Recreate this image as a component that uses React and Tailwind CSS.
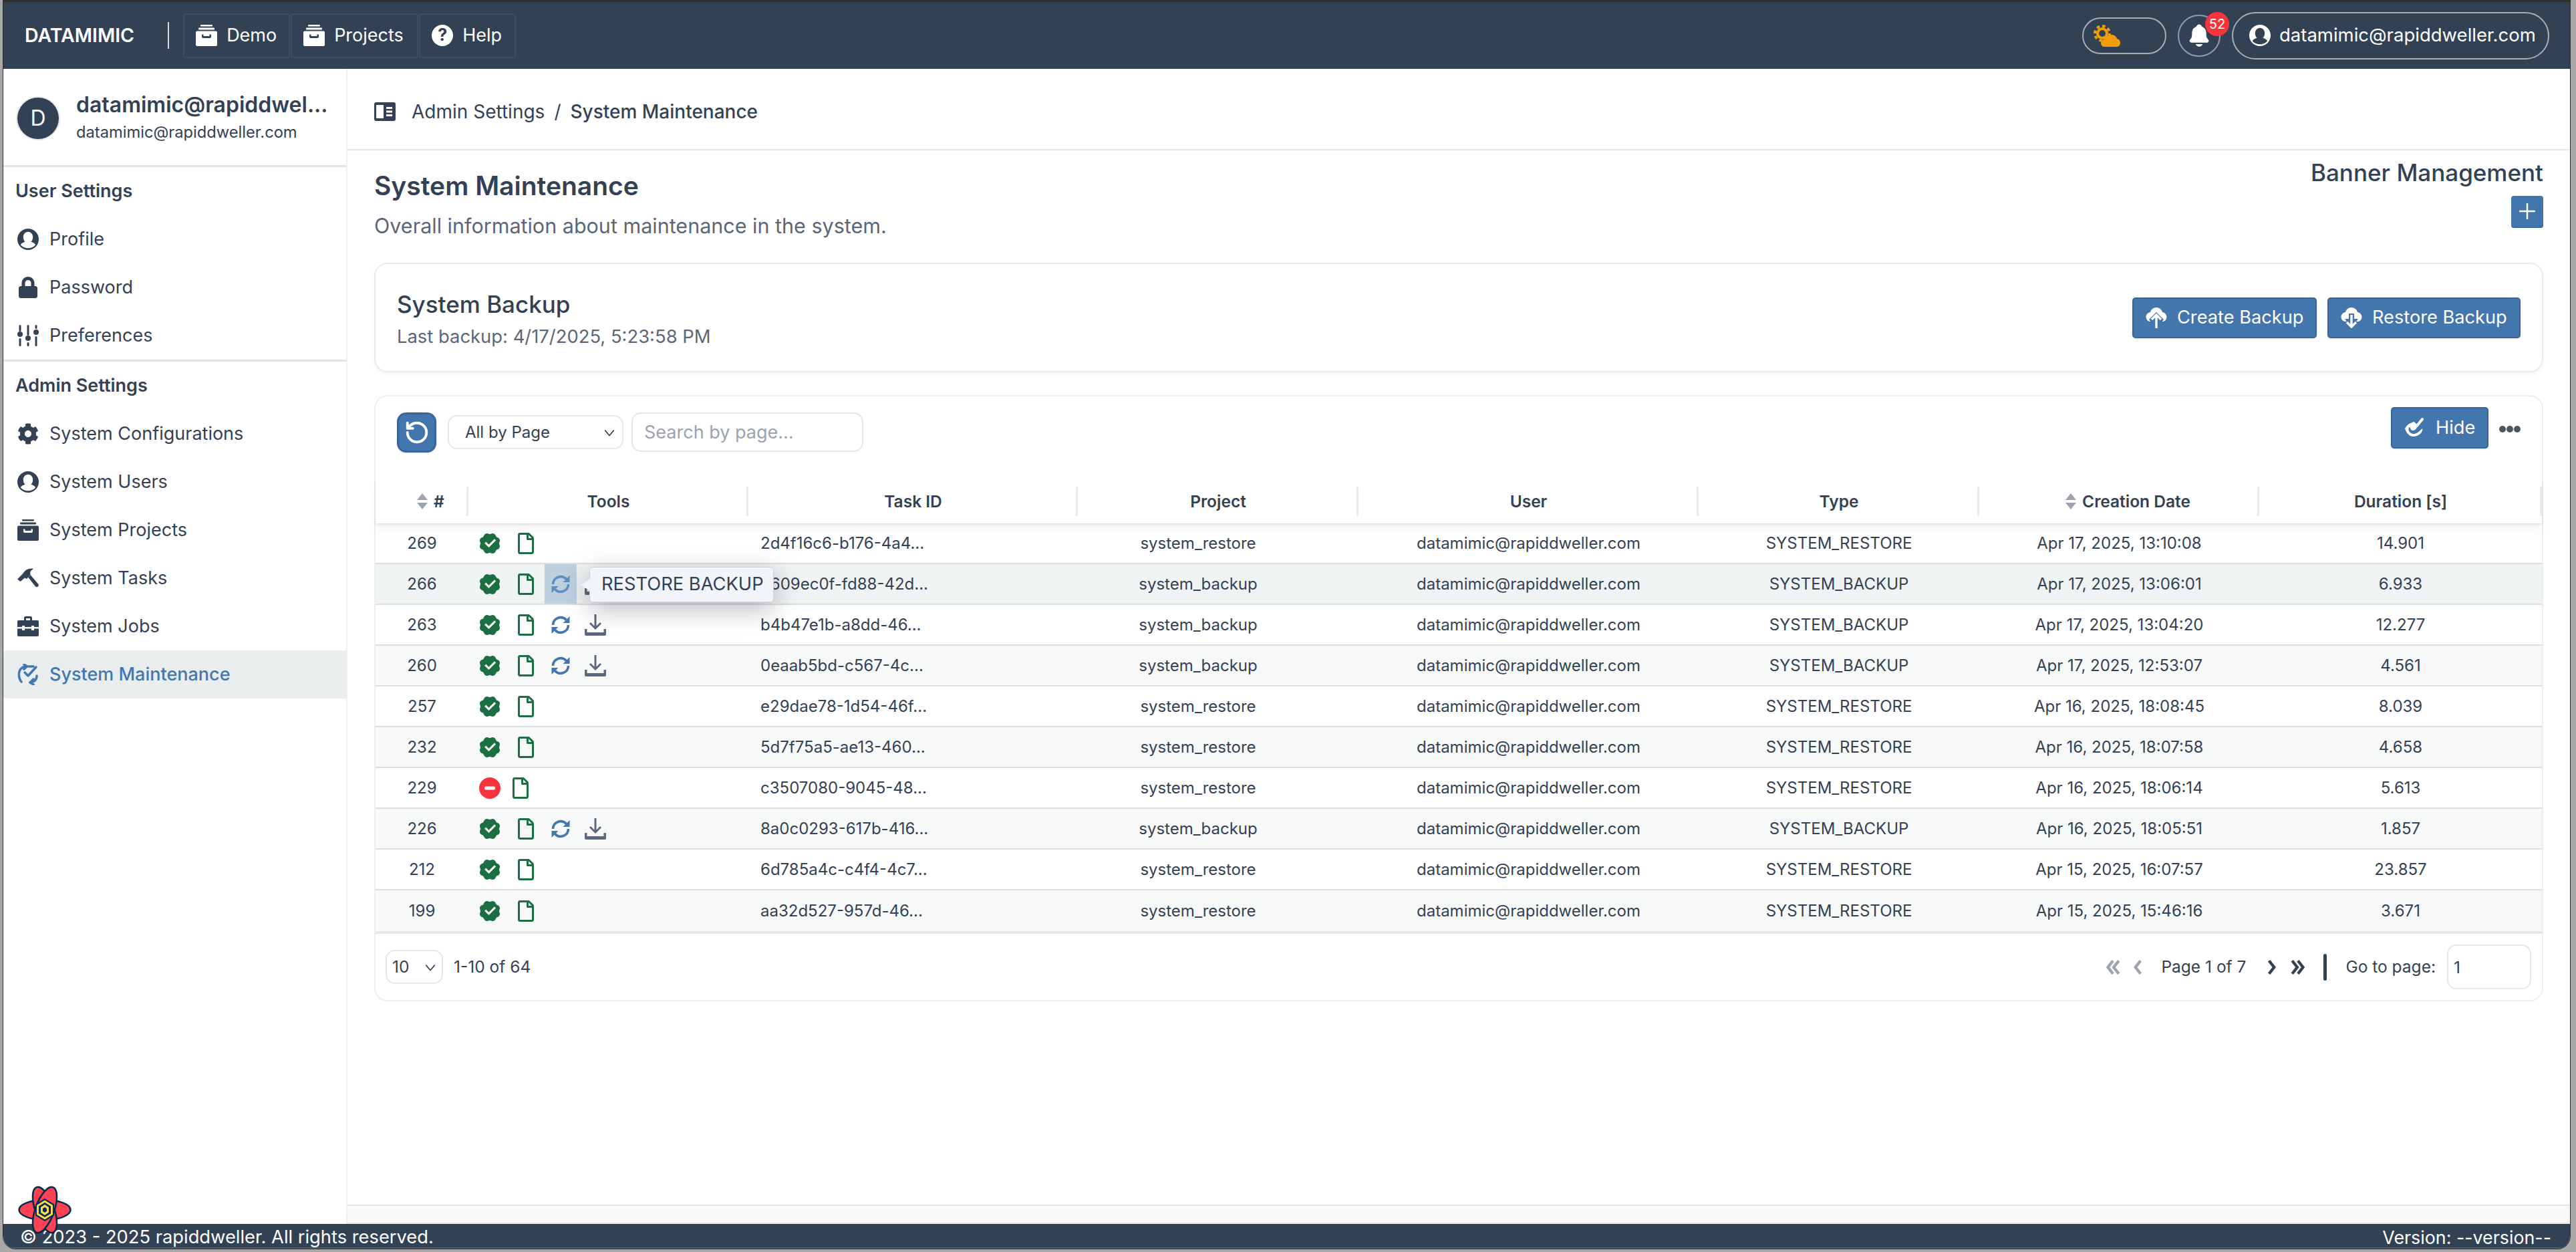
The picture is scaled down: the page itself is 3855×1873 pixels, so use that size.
import React from 'react'
import { FaCog, FaLock, FaRegFile } from 'react-icons/fa'
import { IoNotifications } from 'react-icons/io5'
import { RiVerifiedBadgeFill } from 'react-icons/ri'
import { LuRotateCcw } from 'react-icons/lu'

const ROWS = [
  { n: 269, id: '2d4f16c6-b176-4a4...', project: 'system_restore', type: 'SYSTEM_RESTORE', date: 'Apr 17, 2025, 13:10:08', dur: '14.901' },
  { n: 266, id: '3609ec0f-fd88-42d...', project: 'system_backup', type: 'SYSTEM_BACKUP', date: 'Apr 17, 2025, 13:06:01', dur: '6.933', hover: true },
  { n: 263, id: 'b4b47e1b-a8dd-46...', project: 'system_backup', type: 'SYSTEM_BACKUP', date: 'Apr 17, 2025, 13:04:20', dur: '12.277' },
  { n: 260, id: '0eaab5bd-c567-4c...', project: 'system_backup', type: 'SYSTEM_BACKUP', date: 'Apr 17, 2025, 12:53:07', dur: '4.561' },
  { n: 257, id: 'e29dae78-1d54-46f...', project: 'system_restore', type: 'SYSTEM_RESTORE', date: 'Apr 16, 2025, 18:08:45', dur: '8.039' },
  { n: 232, id: '5d7f75a5-ae13-460...', project: 'system_restore', type: 'SYSTEM_RESTORE', date: 'Apr 16, 2025, 18:07:58', dur: '4.658' },
  { n: 229, id: 'c3507080-9045-48...', project: 'system_restore', type: 'SYSTEM_RESTORE', date: 'Apr 16, 2025, 18:06:14', dur: '5.613', failed: true },
  { n: 226, id: '8a0c0293-617b-416...', project: 'system_backup', type: 'SYSTEM_BACKUP', date: 'Apr 16, 2025, 18:05:51', dur: '1.857' },
  { n: 212, id: '6d785a4c-c4f4-4c7...', project: 'system_restore', type: 'SYSTEM_RESTORE', date: 'Apr 15, 2025, 16:07:57', dur: '23.857' },
  { n: 199, id: 'aa32d527-957d-46...', project: 'system_restore', type: 'SYSTEM_RESTORE', date: 'Apr 15, 2025, 15:46:16', dur: '3.671' },
]

const GRID = 'grid grid-cols-[139px_419px_493px_420px_509px_420px_419px_1fr]'

const PersonIcon = ({ className }) => (
  <svg viewBox="0 0 24 24" className={className}>
    <circle cx="12" cy="12" r="12" fill="currentColor" />
    <path fill="var(--cut)" d="M12 3.500c3.400 0 5.400 2.900 5.400 6 0 2.500-1 4.200-2.100 5.300 2 .7 4.400 1.500 5 3.600-1.800 2.300-5 3.600-8.300 3.600s-6.500-1.300-8.300-3.600c.6-2.100 3-2.900 5-3.600-1.100-1.100-2.100-2.800-2.100-5.300 0-3.100 2-6 5.400-6z" />
  </svg>
)

const ArchiveIcon = ({ className }) => (
  <svg viewBox="0 0 32 32" className={className} fill="currentColor">
    <rect x="7" y="0" width="18" height="2.500" rx="1" />
    <rect x="4" y="4.500" width="24" height="3" rx="1" />
    <path fillRule="evenodd" d="M2 9.500h28a2 2 0 0 1 2 2V30a2 2 0 0 1-2 2H2a2 2 0 0 1-2-2V11.500a2 2 0 0 1 2-2zm7 5v3.500a2 2 0 0 0 2 2h10a2 2 0 0 0 2-2v-3.500h-2.500V17h-9v-2.500z" />
  </svg>
)

const SlidersIcon = ({ className }) => (
  <svg viewBox="0 0 32 32" className={className} fill="currentColor">
    <rect x="2.500" y="0" width="3" height="10" rx="1.500" />
    <circle cx="4" cy="14" r="4" />
    <rect x="2.500" y="20" width="3" height="12" rx="1.500" />
    <rect x="14.500" y="0" width="3" height="16" rx="1.500" />
    <circle cx="16" cy="20" r="4" />
    <rect x="14.500" y="26" width="3" height="6" rx="1.500" />
    <rect x="26.500" y="0" width="3" height="6" rx="1.500" />
    <circle cx="28" cy="11" r="4" />
    <rect x="26.500" y="17" width="3" height="15" rx="1.500" />
  </svg>
)

const CaseIcon = ({ className }) => (
  <svg viewBox="0 0 32 32" className={className} fill="currentColor">
    <path fillRule="evenodd" d="M10 7V3.500A2.500 2.500 0 0 1 12.500 1h7A2.500 2.500 0 0 1 22 3.500V7h-3V4h-6v3z" />
    <path d="M2 7h28a2 2 0 0 1 2 2v8h-7v-2h-4v2H11v-2H7v2H0V9a2 2 0 0 1 2-2z" />
    <path d="M0 19.500h7V22h4v-2.500h10V22h4v-2.500h7V29a2 2 0 0 1-2 2H2a2 2 0 0 1-2-2z" />
  </svg>
)

const HammerIcon = ({ className }) => (
  <svg viewBox="0 0 32 32" className={className} fill="currentColor">
    <path d="M0 17.500 8 9.500C11 4 16 1 23 1.500l.5 1C20 4 18.500 7 19.500 10.500L14 17l-3-1.500-6.500 5.500z" />
    <path d="M16 14.500 19.500 11 31 24.500c1.200 1.500 1 3-.2 4-1.200 1-2.700 1-3.800-.3z" />
  </svg>
)

const MaintenanceIcon = ({ className }) => (
  <svg viewBox="0 0 32 32" className={className} fill="none" stroke="currentColor" strokeWidth="3.500" strokeLinecap="round" strokeLinejoin="round">
    <path d="M6 27C1 21 1 10 7 6c2-1.500 4-2 7-2" />
    <path d="M10 1l4.500 3L10 8" />
    <path d="M29 18c0 5-3 9-10 10" />
    <path d="M24 23l-5 5 5 3" />
    <path d="m11 13 5 5L28 5" />
    <path d="M17 4h7" />
  </svg>
)

const DownloadIcon = ({ className }) => (
  <svg viewBox="0 0 32 32" className={className} fill="currentColor">
    <path d="M14.500 0h3v17.500l5.500-5.500 2 2-9 9-9-9 2-2 5.500 5.500z" />
    <path d="M0 22h3.500v5h25v-5H32v8a2 2 0 0 1-2 2H2a2 2 0 0 1-2-2z" />
  </svg>
)

const SyncIcon = ({ className }) => (
  <svg viewBox="0 0 28 28" className={className}>
    <g fill="none" stroke="currentColor" strokeWidth="3.600">
      <path d="M2.500 14a11.500 11.500 0 0 1 20-7.500" />
      <path d="M25.500 14a11.500 11.500 0 0 1-20 7.500" />
    </g>
    <path fill="currentColor" d="M27.500 1v10h-10zM.5 27V17h10z" />
  </svg>
)

const CloudUp = ({ className }) => (
  <svg viewBox="0 0 32 32" className={className}>
    <path fill="#fff" d="M16 1c4.500 0 8 3 9 7 3.500.5 6.500 3.500 6.500 7 0 3.500-2 6-5 7H5.500C2.500 21 .5 18.500.5 15c0-3.500 3-6.500 6.500-7 1-4 4.500-7 9-7z" />
    <path fill="#4276ad" d="M16 8 5 19l3 4h16l3-4z" />
    <path fill="none" stroke="#fff" strokeWidth="3.400" d="M16 32V12M9 19l7-7 7 7" />
  </svg>
)

const CloudDown = ({ className }) => (
  <svg viewBox="0 0 32 32" className={className}>
    <path fill="#fff" d="M16 1c4.500 0 8 3 9 7 3.500.5 6.500 3.500 6.500 7 0 3.500-2 6-5 7H5.500C2.500 21 .5 18.500.5 15c0-3.500 3-6.500 6.500-7 1-4 4.500-7 9-7z" />
    <path fill="#4276ad" d="M12 10h8v8h6l-10 14L6 18h6z" />
    <path fill="none" stroke="#fff" strokeWidth="3.400" d="M16 12v18M9 23l7 7 7-7" />
  </svg>
)

const WeatherIcon = ({ className }) => (
  <svg viewBox="0 0 40 33" className={className} fill="#f09e0a">
    <circle cx="13" cy="13" r="7" fill="none" stroke="#f09e0a" strokeWidth="4" />
    <circle cx="13" cy="13" r="11" fill="none" stroke="#f09e0a" strokeWidth="4" strokeDasharray="4.600 4" />
    <path d="M27 15c4 0 7 2.500 8 6 3 .5 5 3 5 6 0 3.500-2 6-5 6H16c-3 0-5-2.500-5-5.500 0-3 2-5 4.500-5.500C17 18 21.500 15 27 15z" />
  </svg>
)

const HideIcon = ({ className }) => (
  <svg viewBox="0 0 32 32" className={className} fill="currentColor">
    <path fillRule="evenodd" d="M1 17c2.500-5 6.500-8 11-9l7 7c-1.500 4-4 5-6 5-2.500 0-4-2-4-4l-2-1c-1 3-.5 5 1 7 3 4 8 4 12 1 3-2 5-4 7-6 1.500 4-3.500 12-14 12C7 29 3 23 1 17z" />
    <path fill="none" stroke="currentColor" strokeWidth="4" strokeLinecap="round" strokeLinejoin="round" d="m14 9 4.500 4.500L27 3" />
  </svg>
)

const Sort = () => (
  <svg viewBox="0 0 16 24" className="h-[24px] w-[16px] text-[#9ca3af]" fill="currentColor">
    <path d="M8 0 16 10H0z" />
    <path d="M8 24 16 14H0z" />
  </svg>
)

const Chevron = ({ className }) => (
  <svg viewBox="0 0 16 16" className={className} fill="none" stroke="currentColor" strokeWidth="1.400">
    <path d="m2 5 6 7 6-7" />
  </svg>
)

const Angles = ({ dir, double, className }) => (
  <svg viewBox="0 0 24 24" className={className} fill="none" stroke="currentColor" strokeWidth="4" strokeLinejoin="miter">
    {dir === 'left' ? (
      <>
        <path d={double ? 'M13 3 6 12l7 9' : 'M16 3 9 12l7 9'} />
        {double && <path d="M21 3l-7 9 7 9" />}
      </>
    ) : (
      <>
        <path d={double ? 'M11 3l7 9-7 9' : 'M8 3l7 9-7 9'} />
        {double && <path d="M3 3l7 9-7 9" />}
      </>
    )}
  </svg>
)

const BlueButton = ({ icon, label, className }) => (
  <button type="button" className={`flex h-[61px] items-center gap-[15px] rounded-[5px] border-2 border-[#38669a] bg-[#4276ad] text-[27.200px] text-white shadow-sm ${className}`}>
    {icon}
    {label}
  </button>
)

const NavBtn = ({ icon, label, className }) => (
  <button type="button" className={`flex h-[67px] items-center gap-[14px] rounded-[4px] border-2 border-[#3f4d61] text-[27px] text-white ${className}`}>
    {icon}
    {label}
  </button>
)

const SideItem = ({ icon, label, active }) => (
  <div className={`flex h-[72px] items-center gap-[16px] rounded-l-[5px] pl-[21px] text-[27px] [--cut:#fff] ${active ? 'bg-[#e9edee] font-medium text-[#4277b0]' : 'text-[#334155]'}`}>
    {icon}
    <span>{label}</span>
  </div>
)

const Sidebar = () => (
  <aside className="flex w-[515px] shrink-0 flex-col border-r-2 border-[#eef0f2] bg-white">
    <div className="flex h-[147px] items-center gap-[26px] border-b-[3px] border-[#e4e4e4] pt-[4px] pl-[21px]">
      <div className="flex h-[62px] w-[62px] shrink-0 items-center justify-center rounded-full bg-[#334155] text-[32px] text-white ring-2 ring-[#e5e7eb]">D</div>
      <div className="min-w-0">
        <div className="text-[32px] leading-[40px] font-semibold whitespace-nowrap text-[#334155]">datamimic@rapiddwel...</div>
        <div className="mt-[2px] text-[23.700px] leading-[38px] text-[#334155]">datamimic@rapiddweller.com</div>
      </div>
    </div>
    <div className="flex h-[72px] items-center pl-[18px] text-[27px] font-semibold text-[#334155]">User Settings</div>
    <SideItem icon={<PersonIcon className="h-[32px] w-[32px]" />} label="Profile" />
    <SideItem icon={<FaLock className="h-[32px] w-[32px]" />} label="Password" />
    <SideItem icon={<SlidersIcon className="h-[32px] w-[32px]" />} label="Preferences" />
    <div className="h-[3px] bg-[#e4e4e4]" />
    <div className="flex h-[72px] items-center pl-[18px] text-[27px] font-semibold text-[#334155]">Admin Settings</div>
    <SideItem icon={<FaCog className="h-[32px] w-[32px]" />} label="System Configurations" />
    <SideItem icon={<PersonIcon className="h-[32px] w-[32px]" />} label="System Users" />
    <SideItem icon={<ArchiveIcon className="h-[32px] w-[32px]" />} label="System Projects" />
    <SideItem icon={<HammerIcon className="h-[32px] w-[32px]" />} label="System Tasks" />
    <SideItem icon={<CaseIcon className="h-[32px] w-[32px]" />} label="System Jobs" />
    <SideItem icon={<MaintenanceIcon className="h-[32px] w-[32px]" />} label="System Maintenance" active />
  </aside>
)

const TopBar = () => (
  <header className="flex h-[100px] shrink-0 items-center bg-[#334155] pr-[31px] pl-[32px] text-white">
    <div className="text-[28.500px] font-semibold">DATAMIMIC</div>
    <div className="mr-[21px] ml-[50px] h-[40px] w-[2px] bg-[#d5dae0]" />
    <nav className="flex gap-[1px]">
      <NavBtn icon={<ArchiveIcon className="h-[32px] w-[32px]" />} label="Demo" className="w-[160px] pl-[17px]" />
      <NavBtn icon={<ArchiveIcon className="h-[32px] w-[32px]" />} label="Projects" className="w-[191px] pl-[17px]" />
      <NavBtn
        icon={
          <span className="flex h-[32px] w-[32px] items-center justify-center rounded-full bg-white text-[25px] font-bold text-[#334155]">?</span>
        }
        label="Help"
        className="w-[145px] pl-[17px]"
      />
    </nav>
    <div className="ml-auto flex items-center gap-[17px]">
      <div className="flex h-[55px] w-[126px] items-center rounded-full border-2 border-[#a4b0b4] pl-[15px]">
        <WeatherIcon className="h-[33px] w-[40px]" />
      </div>
      <div className="relative flex h-[63px] w-[64px] items-center justify-center rounded-full border-2 border-[#8f9ca6]">
        <IoNotifications className="h-[38px] w-[38px] text-white" />
        <span className="absolute top-[-6px] right-[-15px] flex h-[36px] w-[36px] items-center justify-center rounded-full bg-[#f8333c] text-[20px] text-white">52</span>
      </div>
      <div className="flex h-[71px] w-[475px] items-center gap-[13px] rounded-full border-2 border-[#a4b0b4] pl-[24px] [--cut:#334155]">
        <PersonIcon className="h-[32px] w-[32px]" />
        <span className="text-[27.500px]">datamimic@rapiddweller.com</span>
      </div>
    </div>
  </header>
)

const HeadCell = ({ label, sort }) => (
  <div className={`relative flex h-full items-center justify-center gap-[9px] text-[24.500px] font-semibold text-[#334155] ${sort ? 'pl-[26px]' : ''}`}>
    {sort && <Sort />}
    {label}
    <span className="absolute top-[11px] right-0 h-[44px] w-[3px] rounded-full bg-[#e8eaee]" />
  </div>
)

const TableRow = ({ row, index }) => (
  <div className={`${GRID} h-[61px] items-center border-b-2 border-[#dcdfe2] text-center text-[24px] text-[#334155] last:border-b-0 ${row.hover ? 'bg-[#eff3f4]' : index % 2 ? 'bg-[#f7f9f9]' : 'bg-white'}`}>
    <div>{row.n}</div>
    <div className="flex h-full items-center pl-[16px]">
      {row.failed ? (
        <svg viewBox="0 0 32 32" className="h-[32px] w-[32px]">
          <circle cx="16" cy="16" r="16" fill="#f8333c" />
          <rect x="8" y="13.500" width="16" height="5" rx="2" fill="#fff" />
        </svg>
      ) : (
        <RiVerifiedBadgeFill className="mx-[-2px] h-[36px] w-[36px] shrink-0 text-[#1c6f42]" />
      )}
      <FaRegFile className={`h-[32px] w-[24px] text-[#1c6f42] ${row.failed ? 'ml-[18px]' : 'ml-[26px]'}`} />
      {row.type === 'SYSTEM_BACKUP' && (
        <>
          <div className={`relative ml-[16px] flex h-full w-[48px] items-center justify-center ${row.hover ? 'bg-[#bdd0e0]' : ''}`}>
            <SyncIcon className={`h-[28px] w-[28px] ${row.hover ? 'text-[#5d8fc0]' : 'text-[#4277b0]'}`} />
            {row.hover && (
              <div className="absolute top-[4px] left-[67px] z-20 flex h-[53px] w-[276px] items-center rounded-[5px] border border-[#cfd3d8] bg-[#f1f5f9] pl-[17px] text-[27.300px] whitespace-nowrap text-[#334155] shadow-[0_10px_40px_rgba(0,0,0,0.28)]">
                <span className="absolute top-[17px] left-[-14px] h-0 w-0 border-y-[9px] border-r-[14px] border-y-transparent border-r-[#f1f5f9]" />
                RESTORE BACKUP
              </div>
            )}
          </div>
          <DownloadIcon className="ml-[12px] h-[32px] w-[32px] text-[#5b6980]" />
        </>
      )}
    </div>
    <div className="pl-[18px] text-left">{row.id}</div>
    <div className="pr-[60px]">{row.project}</div>
    <div>datamimic@rapiddweller.com</div>
    <div>{row.type}</div>
    <div>{row.date}</div>
    <div>{row.dur}</div>
  </div>
)

const TaskTable = () => (
  <section className="mt-[34px] rounded-[20px] border-2 border-[#eceef1] bg-white">
    <div className="flex items-start px-[32px] pt-[24px]">
      <button type="button" className="flex h-[60px] w-[59px] items-center justify-center rounded-[14px] border-[3px] border-[#38669a] bg-[#4276ad] text-white shadow-sm">
        <LuRotateCcw className="h-[38px] w-[38px]" strokeWidth={2.500} />
      </button>
      <div className="mt-[4px] ml-[17px] flex h-[51px] w-[263px] items-center justify-between rounded-[14px] border-2 border-[#e5e7eb] pr-[10px] pl-[24px] text-[24px] text-[#334155]">
        All by Page
        <Chevron className="h-[18px] w-[18px]" />
      </div>
      <input
        placeholder="Search by page..."
        className="ml-[12px] h-[59px] w-[347px] rounded-[14px] border-2 border-[#e5e7eb] pl-[17px] text-[27px] text-[#334155] outline-none placeholder:text-[#9ca3af]"
      />
      <button type="button" className="mt-[-8px] ml-auto flex h-[62px] w-[146px] items-center gap-[15px] rounded-[5px] border-2 border-[#38669a] bg-[#4276ad] pl-[18px] text-[27.200px] text-white shadow-sm">
        <HideIcon className="h-[32px] w-[32px]" />
        Hide
      </button>
      <svg viewBox="0 0 32 10" className="mt-[20px] ml-[16px] h-[10px] w-[32px] text-[#4b5563]" fill="currentColor">
        <circle cx="5" cy="5" r="5" />
        <circle cx="16" cy="5" r="5" />
        <circle cx="27" cy="5" r="5" />
      </svg>
    </div>
    <div className={`${GRID} relative z-10 mt-[40px] h-[66px] bg-white shadow-[0_2px_3px_rgba(0,0,0,0.1),0_12px_16px_rgba(0,0,0,0.04)]`}>
      <HeadCell label="#" sort />
      <HeadCell label="Tools" />
      <HeadCell label="Task ID" />
      <HeadCell label="Project" />
      <HeadCell label="User" />
      <HeadCell label="Type" />
      <HeadCell label="Creation Date" sort />
      <HeadCell label="Duration [s]" />
    </div>
    <div className="border-b-4 border-[#e5e7eb]">
      {ROWS.map((row, i) => (
        <TableRow key={row.n} row={row} index={i} />
      ))}
    </div>
    <div className="flex h-[99px] items-center pr-[16px] pl-[15px] text-[24.500px] text-[#334155]">
      <div className="flex h-[51px] w-[86px] items-center justify-between rounded-[14px] border-2 border-[#e5e7eb] pr-[8px] pl-[8px]">
        10
        <Chevron className="h-[18px] w-[18px]" />
      </div>
      <span className="ml-[16px]">1-10 of 64</span>
      <div className="ml-auto flex items-center">
        <Angles dir="left" double className="h-[26px] w-[26px] text-[#9ca3af]" />
        <Angles dir="left" className="ml-[12px] h-[26px] w-[26px] text-[#9ca3af]" />
        <span className="ml-[22px]">Page 1 of 7</span>
        <Angles dir="right" className="ml-[26px] h-[26px] w-[26px]" />
        <Angles dir="right" double className="ml-[14px] h-[26px] w-[26px]" />
        <span className="ml-[24px] h-[40px] w-[5px] rounded-full bg-[#334155]" />
        <span className="ml-[28px]">Go to page:</span>
        <input
          readOnly
          value="1"
          className="ml-[17px] h-[67px] w-[126px] rounded-[14px] border-2 border-[#e5e7eb] pl-[8px] text-[24.500px] outline-none"
        />
      </div>
    </div>
  </section>
)

const MainPane = () => (
  <main className="flex min-w-0 flex-1 flex-col bg-white">
    <div className="flex h-[122px] shrink-0 items-center gap-[24px] border-b-2 border-[#e5e7eb] pt-[8px] pl-[40px] text-[28px] text-[#334155]">
      <svg viewBox="0 0 32 28" className="h-[28px] w-[32px]" fill="currentColor">
        <path fillRule="evenodd" d="M3 0h26a3 3 0 0 1 3 3v22a3 3 0 0 1-3 3H3a3 3 0 0 1-3-3V3a3 3 0 0 1 3-3zm0 4v20h11V4zm15 3v3h9V7zm0 5.500v3h9v-3zm0 5.500v3h9v-3z" />
      </svg>
      <div className="flex items-center gap-[14px]">
        <span>Admin Settings</span>
        <span>/</span>
        <span className="font-medium">System Maintenance</span>
      </div>
    </div>
    <div className="flex-1 px-[40px] pt-[15px]">
      <div className="flex items-start justify-between">
        <div className="pt-[16px]">
          <h1 className="text-[39px] leading-[44px] font-semibold text-[#334155]">System Maintenance</h1>
          <p className="mt-[18px] text-[30.500px] leading-[40px] text-[#5b6778]">Overall information about maintenance in the system.</p>
        </div>
        <div className="flex flex-col items-end">
          <div className="text-[35px] leading-[36px] font-medium text-[#334155]">Banner Management</div>
          <button type="button" className="mt-[17px] flex h-[48px] w-[48px] items-center justify-center rounded-[4px] border-b-2 border-[#38669a] bg-[#4276ad]">
            <svg viewBox="0 0 24 24" className="h-[24px] w-[24px]" stroke="#fff" strokeWidth="2.500" strokeLinecap="round">
              <path d="M12 1v22M1 12h22" />
            </svg>
          </button>
        </div>
      </div>
      <section className="mt-[35px] flex h-[164px] items-center justify-between rounded-[20px] border-2 border-[#e9ebee] bg-white pr-[32px] pl-[32px] shadow-[0_3px_6px_rgba(0,0,0,0.05)]">
        <div className="mt-[4px]">
          <h2 className="text-[35px] leading-[44px] font-medium text-[#334155]">System Backup</h2>
          <p className="mt-[8px] text-[27.400px] leading-[36px] text-[#5b6778]">Last backup: 4/17/2025, 5:23:58 PM</p>
        </div>
        <div className="flex gap-[16px]">
          <BlueButton icon={<CloudUp className="h-[32px] w-[32px]" />} label="Create Backup" className="w-[276px] pl-[18px]" />
          <BlueButton icon={<CloudDown className="h-[32px] w-[32px]" />} label="Restore Backup" className="w-[289px] pl-[18px]" />
        </div>
      </section>
      <TaskTable />
    </div>
    <div className="h-[29px] shrink-0 border-y-2 border-[#e9e9e9] bg-[#f9f9f9]" />
  </main>
)

export default function App() {
  return (
    <div className="relative h-[1873px] w-[3855px] overflow-hidden bg-[#a9a9a9] pr-[8px] pb-[4px] pl-[4px] font-[family-name:Inter,sans-serif] [--cut:#fff]">
      <div className="flex h-full flex-col overflow-hidden rounded-b-[20px] border border-t-[3px] border-[#2f2f2f] bg-white">
        <TopBar />
        <div className="flex min-h-0 flex-1 shadow-[inset_0_4px_4px_rgba(0,0,0,0.06)]">
          <Sidebar />
          <MainPane />
        </div>
        <footer className="flex h-[37px] shrink-0 items-center justify-between border-b-2 border-[#4f5d73] bg-[#334155] pt-[6px] pr-[28px] pl-[25px] text-[27.300px] text-white">
          <span>© 2023 - 2025 rapiddweller. All rights reserved.</span>
          <span className="text-[26.800px]">Version: --version--</span>
        </footer>
      </div>
      <svg viewBox="0 0 80 72" className="absolute top-[1774px] left-[27px] h-[72px] w-[80px]">
        <g fill="#ff4154" stroke="#002c4b" strokeWidth="2.500">
          <ellipse cx="40" cy="36" rx="38.500" ry="15" />
          <ellipse cx="40" cy="36" rx="36" ry="14" transform="rotate(70 40 36)" />
          <ellipse cx="40" cy="36" rx="36" ry="14" transform="rotate(110 40 36)" />
        </g>
        <path d="M40 19l14 8.500v17L40 53l-14-8.500v-17z" fill="#002c4b" />
        <path d="M40 21.500l12 7.500v14l-12 7.500-12-7.500V29z" fill="#ffd94c" />
        <path d="M40 25l9 5.500v11L40 47l-9-5.500v-11z" fill="#002c4b" />
        <path d="M40 28l6 4v8l-6 4-6-4v-8z" fill="#ffd94c" />
        <path d="M40 32l3 2v4l-3 2-3-2v-4z" fill="#002c4b" />
      </svg>
    </div>
  )
}
